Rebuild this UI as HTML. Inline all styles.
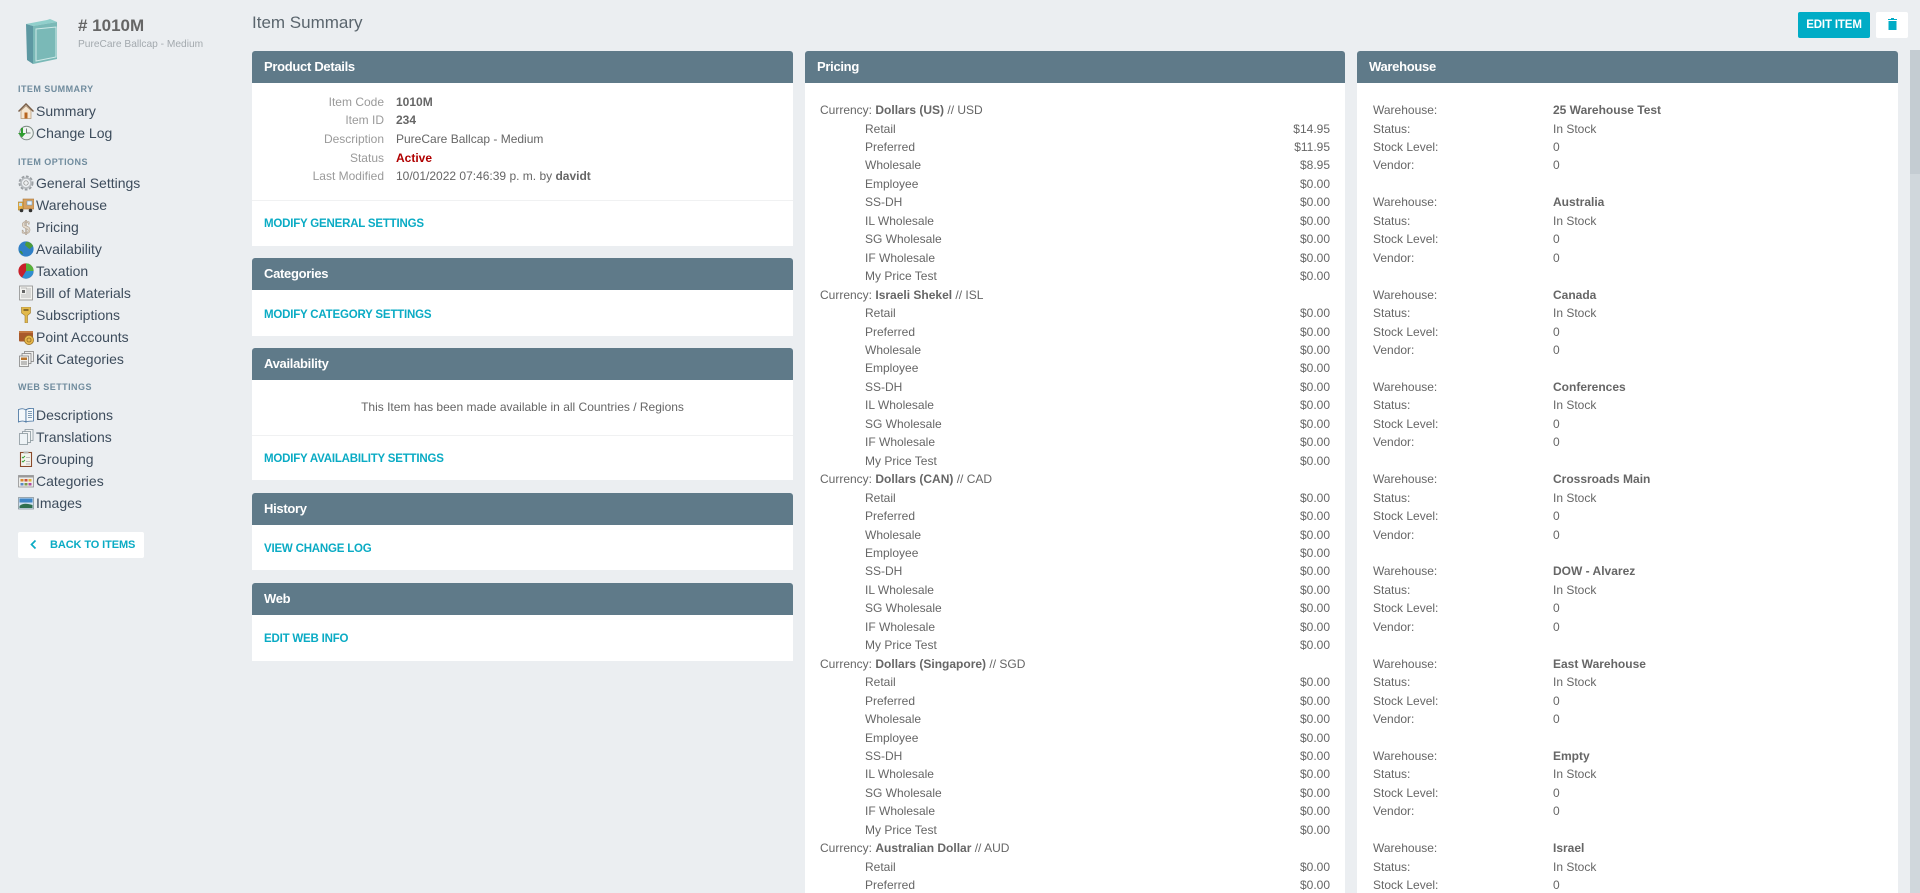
<!DOCTYPE html>
<html><head><meta charset="utf-8"><title>Item Summary</title>
<style>
*{box-sizing:border-box}
html,body{margin:0;padding:0;width:1920px;height:893px;overflow:hidden;background:#ebeef1;font-family:"Liberation Sans",Arial,sans-serif;font-size:12px;color:#666}
.a{position:absolute;white-space:nowrap}
.sec{position:absolute;left:18px;font-size:9px;font-weight:bold;letter-spacing:.45px;color:#6f8b9d;line-height:12px}
.nav{position:absolute;left:36px;font-size:14px;line-height:20px;color:#3d4c5c;white-space:nowrap}
.ic{position:absolute;left:18px;width:16px;height:16px}
.panel{position:absolute;background:#fff;border-radius:3px 3px 0 0;overflow:hidden}
.hd{height:32px;background:#5f7a89;color:#fff;font-weight:bold;font-size:13px;line-height:32px;padding-left:12px;letter-spacing:-.3px}
.lnk{position:absolute;left:12px;color:#0aabc4;font-weight:bold;font-size:11.5px;line-height:16px;white-space:nowrap;letter-spacing:-.2px}
.div{position:absolute;left:0;right:0;height:1px;background:#f0f1f2}
.l{position:absolute;left:0;width:132px;text-align:right;color:#9a9a9a;line-height:18px}
.v{position:absolute;left:144px;line-height:18px;white-space:nowrap}
.r{height:18.467px;line-height:18.467px;position:relative;white-space:nowrap}
.c{padding-left:15px}
.p{padding-left:60px}
.p i{position:absolute;right:15px;font-style:normal}
.w{padding-left:16px}
.w span{position:absolute;left:196px}
</style></head><body>

<svg class="a" style="left:26px;top:19px" width="32" height="46" viewBox="26 19 32 46">
<polygon points="26,24 47,20 50,19 57,22 33,26" fill="#90cfcb"/>
<polygon points="26,24 33,26 33,64 27,60" fill="#5d98a2"/>
<polygon points="33,26 57,22 57,59 33,64" fill="#7ab9b7"/>
<polygon points="36,29 56,27 56,57 36,61" fill="none" stroke="#cfe9e7" stroke-width="1"/>
</svg>
<div class="a" style="left:78px;top:15px;font-size:17px;font-weight:bold;line-height:22px;color:#666">#&nbsp;1010M</div>
<div class="a" style="left:78px;top:38px;font-size:10.2px;line-height:14px;color:#a3a9ae">PureCare Ballcap - Medium</div>

<div class="sec" style="top:83px">ITEM SUMMARY</div>
<svg class="ic" style="top:103px" viewBox="0 0 16 16"><path d="M3 7.500 8 3l5 4.500V15.500H3z" fill="#f4e6d2" stroke="#b59670" stroke-width=".7"/><path d="M.5 8.500 8 1l7.500 7.500" fill="none" stroke="#7a5f48" stroke-width="1.500"/><rect x="6.500" y="9.500" width="3" height="6" fill="#b8651f"/></svg>
<div class="nav" style="top:101px">Summary</div>
<svg class="ic" style="top:125px" viewBox="0 0 16 16"><circle cx="8.500" cy="8" r="6.800" fill="#eef2f0" stroke="#7c8a84" stroke-width="1"/><path d="M8.500 3.500V8h4" fill="none" stroke="#55605c" stroke-width=".8"/><path d="M5 3v5h3L4 12.500 0 8h3V3z" fill="#2f9e2f"/></svg>
<div class="nav" style="top:123px">Change Log</div>

<div class="sec" style="top:156px">ITEM OPTIONS</div>
<svg class="ic" style="top:175px" viewBox="0 0 16 16"><circle cx="8" cy="8" r="6" fill="none" stroke="#9a9fa3" stroke-width="3" stroke-dasharray="2.500 1.500"/><circle cx="8" cy="8" r="5" fill="none" stroke="#b8bcc0" stroke-width="1.600"/><circle cx="8" cy="8" r="2.200" fill="#eef0f1" stroke="#888" stroke-width=".7"/></svg>
<div class="nav" style="top:173px">General Settings</div>
<svg class="ic" style="top:197px" viewBox="0 0 16 16"><rect x="5" y="2" width="11" height="10" fill="#d7a05e" stroke="#a8753a" stroke-width=".6"/><rect x="9" y="4" width="5" height="4" fill="#e9f3fb" stroke="#5a8fc0" stroke-width=".5"/><rect x="0" y="5" width="5" height="8" fill="#e8b24a" stroke="#9c7a30" stroke-width=".6"/><rect x="1" y="6" width="3" height="3" fill="#bfdcf0"/><circle cx="3.500" cy="13.500" r="1.800" fill="#333"/><circle cx="12.500" cy="13.500" r="1.800" fill="#333"/></svg>
<div class="nav" style="top:195px">Warehouse</div>
<svg class="ic" style="top:219px" viewBox="0 0 16 16"><text x="8" y="14.500" text-anchor="middle" font-family="Liberation Serif,serif" font-size="18" font-weight="bold" fill="#e3d9cb" stroke="#a39382" stroke-width=".5">$</text></svg>
<div class="nav" style="top:217px">Pricing</div>
<svg class="ic" style="top:241px" viewBox="0 0 16 16"><circle cx="8" cy="8" r="7.600" fill="#2f7fc6"/><path d="M8 1c3-.5 6 1.500 7 4L11.500 8 9 6 7 4z" fill="#4c9a3a"/><path d="M1.500 10c2-.5 3 1 3.500 3.500-2-.5-3-2-3.500-3.500z" fill="#3f8f3c"/></svg>
<div class="nav" style="top:239px">Availability</div>
<svg class="ic" style="top:263px" viewBox="0 0 16 16"><circle cx="8" cy="8" r="7.600" fill="#c8202a"/><path d="M8 8V.4A7.600 7.600 0 0 1 15.600 8z" fill="#55b33c"/><path d="M8 8h7.600A7.600 7.600 0 0 1 4 14.500z" fill="#2f8fd0"/></svg>
<div class="nav" style="top:261px">Taxation</div>
<svg class="ic" style="top:285px" viewBox="0 0 16 16"><rect x="1.500" y="1" width="13" height="14" fill="#f2f2ef" stroke="#8e8e8e" stroke-width=".8"/><rect x="4" y="5" width="3" height="3" fill="#666"/><path d="M8 4h5M8 6h5M8 8h5M3 10h10M3 12h10M3 3h6" stroke="#aaa" stroke-width=".8"/></svg>
<div class="nav" style="top:283px">Bill of Materials</div>
<svg class="ic" style="top:307px" viewBox="0 0 16 16"><path d="M3.500 0h9v6l-3 2.500V16H7V8.500l-3.500-2.500z" fill="#e2b94a" stroke="#9c7a30" stroke-width=".6"/><rect x="5.500" y="2" width="5" height="2" fill="#8a6c2a"/></svg>
<div class="nav" style="top:305px">Subscriptions</div>
<svg class="ic" style="top:329px" viewBox="0 0 16 16"><rect x="1" y="2" width="14" height="10.500" rx="1" fill="#a9592a"/><rect x="1" y="2" width="14" height="2" fill="#c47b43"/><circle cx="11" cy="11" r="4.600" fill="#e6b54a" stroke="#946f25" stroke-width=".7"/><circle cx="11" cy="11" r="2" fill="none" stroke="#946f25" stroke-width=".8"/></svg>
<div class="nav" style="top:327px">Point Accounts</div>
<svg class="ic" style="top:351px" viewBox="0 0 16 16"><rect x="6.500" y=".5" width="9" height="10" fill="#eee" stroke="#777" stroke-width=".7"/><rect x="4" y="2.500" width="9" height="10" fill="#eee" stroke="#777" stroke-width=".7"/><rect x="1.500" y="5" width="9" height="10.500" fill="#f3f3f1" stroke="#777" stroke-width=".7"/><rect x="3" y="6.500" width="6" height="2.500" fill="#b8752e"/><path d="M3 11h6M3 13h6" stroke="#888" stroke-width="1"/></svg>
<div class="nav" style="top:349px">Kit Categories</div>

<div class="sec" style="top:381px">WEB SETTINGS</div>
<svg class="ic" style="top:407px" viewBox="0 0 16 16"><path d="M.5 2.500C3 1.500 6 1.500 8 3v12c-2-1.200-5-1.200-7.500 0z" fill="#f4f8fb" stroke="#3f6d9c" stroke-width=".8"/><path d="M8 3c1-1.500 5-1.800 7.500-1.500V14c-3 0-6 0-7.500 1z" fill="#f4f8fb" stroke="#3f6d9c" stroke-width=".8"/><path d="M10 4.500h4M10 6.500h4M10 8.500h4M10 10.500h4" stroke="#5a7c9c" stroke-width=".8"/></svg>
<div class="nav" style="top:405px">Descriptions</div>
<svg class="ic" style="top:429px" viewBox="0 0 16 16"><rect x="7" y=".5" width="8" height="11" fill="#f2f4f5" stroke="#7d8a92" stroke-width=".7"/><rect x="4.500" y="2.500" width="8" height="11" fill="#f2f4f5" stroke="#7d8a92" stroke-width=".7"/><rect x="1.500" y="4.500" width="8" height="11" fill="#eef3f6" stroke="#7d8a92" stroke-width=".7"/></svg>
<div class="nav" style="top:427px">Translations</div>
<svg class="ic" style="top:451px" viewBox="0 0 16 16"><rect x="2.500" y="1.500" width="11" height="14" fill="#f4f4ee" stroke="#8a4a2a" stroke-width="1.100"/><rect x="5.500" y=".5" width="5" height="2" fill="#b5b5b0"/><path d="M4 6l1 1 2-2M4 10l1 1 2-2" fill="none" stroke="#2f9e2f" stroke-width=".9"/><path d="M8 6.500h4M8 10.500h4M8 13h4" stroke="#aaa" stroke-width=".8"/></svg>
<div class="nav" style="top:449px">Grouping</div>
<svg class="ic" style="top:473px" viewBox="0 0 16 16"><rect x=".5" y="2.500" width="15" height="11.500" fill="#ededeb" stroke="#858585" stroke-width=".7"/><rect x=".5" y="2.500" width="15" height="2" fill="#999"/><rect x="2.500" y="6" width="3" height="2.500" fill="#d98c2b"/><rect x="6.500" y="6" width="3" height="2.500" fill="#c9503a"/><rect x="10.500" y="6" width="3" height="2.500" fill="#e2b13a"/><rect x="2.500" y="10" width="3" height="2.500" fill="#5a86c4"/><rect x="6.500" y="10" width="3" height="2.500" fill="#7a9a4a"/><rect x="10.500" y="10" width="3" height="2.500" fill="#b04ba0"/></svg>
<div class="nav" style="top:471px">Categories</div>
<svg class="ic" style="top:495px" viewBox="0 0 16 16"><rect x=".5" y="2.500" width="15" height="11.500" fill="#cfe0f0" stroke="#7d8a92" stroke-width=".7"/><rect x="1.500" y="3.500" width="13" height="4" fill="#3d85c6"/><path d="M1.500 11C5 8 9 8.500 14.500 10v3h-13z" fill="#2f6f4f"/></svg>
<div class="nav" style="top:493px">Images</div>

<div class="a" style="left:18px;top:532px;width:126px;height:26px;background:#fff;border-radius:2px"></div>
<svg class="a" style="left:30px;top:539px" width="7" height="11" viewBox="0 0 7 11"><path d="M5.500 1.500 1.500 5.500l4 4" fill="none" stroke="#0aabc4" stroke-width="1.700"/></svg>
<div class="a" style="left:50px;top:537px;font-size:11px;font-weight:bold;line-height:16px;color:#0aabc4;letter-spacing:-.1px">BACK TO ITEMS</div>

<div class="a" style="left:252px;top:12px;font-size:17px;line-height:22px;color:#5a656d">Item Summary</div>
<div class="a" style="left:1798px;top:12px;width:72px;height:26px;background:#00acc6;border-radius:2px;color:#fff;font-weight:bold;font-size:11.5px;line-height:26px;text-align:center;letter-spacing:-.15px">EDIT ITEM</div>
<div class="a" style="left:1876px;top:12px;width:32px;height:26px;background:#fff;border-radius:2px"></div>
<svg class="a" style="left:1888px;top:18px" width="9" height="12" viewBox="0 0 9 12"><path d="M3 0h3v1H3z" fill="#00acc6"/><path d="M0 1h9v1H0z" fill="#00acc6"/><path d="M.5 3h8v9h-8z" fill="#00acc6"/></svg>

<div class="a" style="left:1910px;top:50px;width:10px;height:843px;background:#d0d7dc"></div>
<div class="a" style="left:1910px;top:50px;width:10px;height:124px;background:#c4ccd2"></div>

<div class="panel" style="left:252px;top:51px;width:541px;height:195px"><div class="hd">Product Details</div>
<div class="l" style="top:42px">Item Code</div><div class="v" style="top:42px"><b>1010M</b></div>
<div class="l" style="top:60px">Item ID</div><div class="v" style="top:60px"><b>234</b></div>
<div class="l" style="top:79px">Description</div><div class="v" style="top:79px">PureCare Ballcap - Medium</div>
<div class="l" style="top:98px">Status</div><div class="v" style="top:98px;color:#b00000"><b>Active</b></div>
<div class="l" style="top:116px">Last Modified</div><div class="v" style="top:116px">10/01/2022 07:46:39 p. m. by <b>davidt</b></div>
<div class="div" style="top:149px"></div>
<div class="lnk" style="top:165px">MODIFY GENERAL SETTINGS</div></div>

<div class="panel" style="left:252px;top:258px;width:541px;height:78px"><div class="hd">Categories</div>
<div class="lnk" style="top:49px">MODIFY CATEGORY SETTINGS</div></div>

<div class="panel" style="left:252px;top:348px;width:541px;height:132px"><div class="hd">Availability</div>
<div class="a" style="left:0;width:541px;top:50px;text-align:center;line-height:18px">This Item has been made available in all Countries / Regions</div>
<div class="div" style="top:87px"></div>
<div class="lnk" style="top:103px">MODIFY AVAILABILITY SETTINGS</div></div>

<div class="panel" style="left:252px;top:493px;width:541px;height:77px"><div class="hd">History</div>
<div class="lnk" style="top:48px">VIEW CHANGE LOG</div></div>

<div class="panel" style="left:252px;top:583px;width:541px;height:78px"><div class="hd">Web</div>
<div class="lnk" style="top:48px">EDIT WEB INFO</div></div>

<div class="panel" style="left:805px;top:51px;width:540px;height:842px"><div class="hd">Pricing</div><div style="height:18.1px"></div>
<div class="r c">Currency: <b>Dollars (US)</b> // USD</div>
<div class="r p">Retail<i>$14.95</i></div><div class="r p">Preferred<i>$11.95</i></div><div class="r p">Wholesale<i>$8.95</i></div><div class="r p">Employee<i>$0.00</i></div><div class="r p">SS-DH<i>$0.00</i></div><div class="r p">IL Wholesale<i>$0.00</i></div><div class="r p">SG Wholesale<i>$0.00</i></div><div class="r p">IF Wholesale<i>$0.00</i></div><div class="r p">My Price Test<i>$0.00</i></div>
<div class="r c">Currency: <b>Israeli Shekel</b> // ISL</div>
<div class="r p">Retail<i>$0.00</i></div><div class="r p">Preferred<i>$0.00</i></div><div class="r p">Wholesale<i>$0.00</i></div><div class="r p">Employee<i>$0.00</i></div><div class="r p">SS-DH<i>$0.00</i></div><div class="r p">IL Wholesale<i>$0.00</i></div><div class="r p">SG Wholesale<i>$0.00</i></div><div class="r p">IF Wholesale<i>$0.00</i></div><div class="r p">My Price Test<i>$0.00</i></div>
<div class="r c">Currency: <b>Dollars (CAN)</b> // CAD</div>
<div class="r p">Retail<i>$0.00</i></div><div class="r p">Preferred<i>$0.00</i></div><div class="r p">Wholesale<i>$0.00</i></div><div class="r p">Employee<i>$0.00</i></div><div class="r p">SS-DH<i>$0.00</i></div><div class="r p">IL Wholesale<i>$0.00</i></div><div class="r p">SG Wholesale<i>$0.00</i></div><div class="r p">IF Wholesale<i>$0.00</i></div><div class="r p">My Price Test<i>$0.00</i></div>
<div class="r c">Currency: <b>Dollars (Singapore)</b> // SGD</div>
<div class="r p">Retail<i>$0.00</i></div><div class="r p">Preferred<i>$0.00</i></div><div class="r p">Wholesale<i>$0.00</i></div><div class="r p">Employee<i>$0.00</i></div><div class="r p">SS-DH<i>$0.00</i></div><div class="r p">IL Wholesale<i>$0.00</i></div><div class="r p">SG Wholesale<i>$0.00</i></div><div class="r p">IF Wholesale<i>$0.00</i></div><div class="r p">My Price Test<i>$0.00</i></div>
<div class="r c">Currency: <b>Australian Dollar</b> // AUD</div>
<div class="r p">Retail<i>$0.00</i></div><div class="r p">Preferred<i>$0.00</i></div>
</div>

<div class="panel" style="left:1357px;top:51px;width:541px;height:842px"><div class="hd">Warehouse</div><div style="height:18.1px"></div>
<div class="r w">Warehouse:<span><b>25 Warehouse Test</b></span></div><div class="r w">Status:<span>In Stock</span></div><div class="r w">Stock Level:<span>0</span></div><div class="r w">Vendor:<span>0</span></div><div class="r"></div>
<div class="r w">Warehouse:<span><b>Australia</b></span></div><div class="r w">Status:<span>In Stock</span></div><div class="r w">Stock Level:<span>0</span></div><div class="r w">Vendor:<span>0</span></div><div class="r"></div>
<div class="r w">Warehouse:<span><b>Canada</b></span></div><div class="r w">Status:<span>In Stock</span></div><div class="r w">Stock Level:<span>0</span></div><div class="r w">Vendor:<span>0</span></div><div class="r"></div>
<div class="r w">Warehouse:<span><b>Conferences</b></span></div><div class="r w">Status:<span>In Stock</span></div><div class="r w">Stock Level:<span>0</span></div><div class="r w">Vendor:<span>0</span></div><div class="r"></div>
<div class="r w">Warehouse:<span><b>Crossroads Main</b></span></div><div class="r w">Status:<span>In Stock</span></div><div class="r w">Stock Level:<span>0</span></div><div class="r w">Vendor:<span>0</span></div><div class="r"></div>
<div class="r w">Warehouse:<span><b>DOW - Alvarez</b></span></div><div class="r w">Status:<span>In Stock</span></div><div class="r w">Stock Level:<span>0</span></div><div class="r w">Vendor:<span>0</span></div><div class="r"></div>
<div class="r w">Warehouse:<span><b>East Warehouse</b></span></div><div class="r w">Status:<span>In Stock</span></div><div class="r w">Stock Level:<span>0</span></div><div class="r w">Vendor:<span>0</span></div><div class="r"></div>
<div class="r w">Warehouse:<span><b>Empty</b></span></div><div class="r w">Status:<span>In Stock</span></div><div class="r w">Stock Level:<span>0</span></div><div class="r w">Vendor:<span>0</span></div><div class="r"></div>
<div class="r w">Warehouse:<span><b>Israel</b></span></div><div class="r w">Status:<span>In Stock</span></div><div class="r w">Stock Level:<span>0</span></div>
</div>
</body></html>
